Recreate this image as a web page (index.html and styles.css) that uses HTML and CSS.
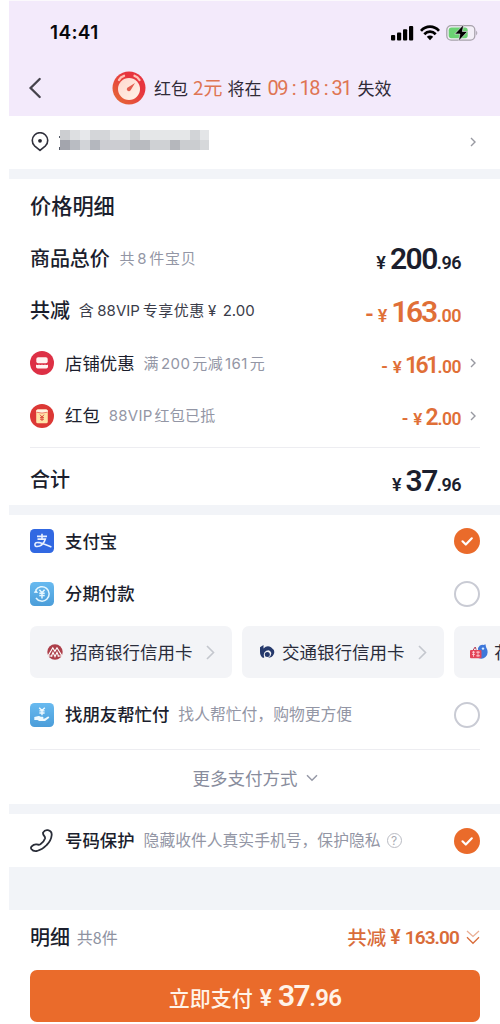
FILE: index.html
```html
<!DOCTYPE html>
<html lang="zh-CN">
<head>
<meta charset="utf-8">
<title>确认订单</title>
<link rel="stylesheet" href="styles.css">
</head>
<body>
<div class="app">
  <header class="header">
    <div class="status">
      <span class="clock">14:41</span>
      <div class="status-icons">
        <svg width="23" height="16" viewBox="0 0 23 16"><rect x="0" y="10" width="4.2" height="5.5" rx="1"/><rect x="6" y="7.5" width="4.2" height="8" rx="1"/><rect x="12" y="4.3" width="4.2" height="11.2" rx="1"/><rect x="18" y="1" width="4.2" height="14.5" rx="1"/></svg>
        <svg width="20" height="16" viewBox="0 0 20 16"><g fill="none" stroke="#000" stroke-width="2.7"><path d="M1 5.8C6 .3 14 .3 19 5.8"/><path d="M4.3 9.2c3.3-3.4 8.1-3.4 11.4 0"/></g><path d="M6.8 11.7c2-1.7 4.4-1.7 6.4 0L10 15.2z"/></svg>
        <svg width="33" height="18" viewBox="0 0 33 18"><rect x=".8" y="1.6" width="28" height="14.5" rx="4.3" fill="#f3eff7" stroke="#a7a2ab" stroke-width="1.3"/><rect x="2.7" y="3.5" width="19" height="10.7" rx="2.7" fill="#6bd273"/><path d="M30.2 6.5q2.2 2.4 0 5z" fill="#a7a2ab"/><path d="M17.7.5 8.7 10h5.2l-1.3 7 8.9-9.5h-5.1z" stroke="#f3eff7" stroke-width=".6"/></svg>
      </div>
    </div>
    <div class="notice">
      <svg class="back" width="14" height="22" viewBox="0 0 14 22"><path d="M11.7 2 2.6 11l9.1 9"/></svg>
      <div class="notice-text">
        <svg width="34" height="34" viewBox="0 0 34 34"><defs><linearGradient id="ring" x1="1" y1="0" x2="0" y2="1"><stop offset=".35" stop-color="#e7353f"/><stop offset="1" stop-color="#e57135"/></linearGradient><linearGradient id="dial" x1="0" y1="0" x2="1" y2="1"><stop stop-color="#ffd8cf"/><stop offset="1" stop-color="#fff3e7"/></linearGradient></defs><circle cx="17" cy="17" r="16.5" fill="url(#ring)"/><circle cx="17" cy="18" r="11" fill="url(#dial)"/><path d="M7 9q1.5-3.2 5-4.2M22.5 4.8q3.2 1 5 4.2" fill="none" stroke="#ffc2b7" stroke-width="2.3" stroke-linecap="round"/><path d="m23 12-4.2 7.1a2.1 2.1 0 1 1-2.6-2.9z" fill="#e35e50"/></svg>
        <span class="n1">红包</span><span class="n2 hot">2元</span><span class="n3">将在</span><span class="time hot"><b>09</b><i>:</i><b>18</b><i>:</i><b>31</b></span><span class="n4">失效</span>
      </div>
    </div>
  </header>

  <section class="address">
    <svg width="18" height="20" viewBox="0 0 18 20"><path d="M9 18.4 3.5 13.8a7.7 7.7 0 1 1 11 0z" fill="none" stroke="#30303c" stroke-width="1.6" stroke-linejoin="round"/><circle cx="9" cy="8.8" r="1.9" fill="#25252f"/></svg>
    <svg class="mask" width="151" height="21" viewBox="0 0 151 21" shape-rendering="crispEdges"><path d="M0 6h1v2H0zM0 17h1v3H0z" fill="#555b68"/><path d="M1 0h10v10H1z" fill="#ccced1"/><path d="M11 0h10v10H11z" fill="#dddfe1"/><path d="M21 0h10v10H21z" fill="#e7e8eb"/><path d="M31 0h20v10H31z" fill="#d4d6d9"/><path d="M51 0h20v10H51z" fill="#e3e4e6"/><path d="M71 0h10v10H71z" fill="#d1d3d5"/><path d="M81 0h50v10H81z" fill="#e5e7e8"/><path d="M131 0h10v10h-10z" fill="#d2d4d7"/><path d="M141 0h9v10h-9z" fill="#e3e5e7"/><path d="M1 10h10v10H1z" fill="#a3a5ad"/><path d="M11 10h10v10H11z" fill="#b9bcc2"/><path d="M21 10h10v10H21z" fill="#d2d4d8"/><path d="M31 10h10v10H31z" fill="#b4b7be"/><path d="M41 10h30v10H41z" fill="#cccdd2"/><path d="M71 10h20v10H71z" fill="#b9bbc0"/><path d="M91 10h20v10H91z" fill="#cfd1d4"/><path d="M111 10h10v10h-10z" fill="#b5b7bc"/><path d="M121 10h20v10h-20z" fill="#cbcdd0"/><path d="M141 10h9v10h-9z" fill="#d6d8da"/></svg>
    <svg class="arrow" width="6" height="10" viewBox="0 0 6 10"><path d="m1 1 4 4-4 4"/></svg>
  </section>

  <section class="prices">
    <h2>价格明细</h2>
    <div class="row"><span class="label">商品总价</span><span class="note count">共<b>8</b>件宝贝</span><span class="amount big"><i>¥</i><b>200</b><small>.96</small></span></div>
    <div class="row"><span class="label reduce">共减</span><span class="vip">含<b>88VIP</b>专享优惠<em>¥</em><b>2.00</b></span><span class="amount big orange"><u>-</u><i>¥</i><b>163</b><small>.00</small></span></div>
    <div class="row">
      <svg class="icon" width="24" height="24" viewBox="0 0 24 24"><circle cx="12" cy="12" r="12" fill="#dd3045"/><rect x="6.3" y="6.2" width="11.4" height="6" rx="1.8" fill="#fff3f1"/><path d="M6 13.6q1.5 1 3 0 1.5 1 3 0 1.5 1 3 0 1.5 1 3 0v2.2q0 1.7-1.7 1.7H7.7Q6 17.500 6 15.800z" fill="#fff3f1"/></svg>
      <span class="name light">店铺优惠</span><span class="note shop">满<b>200</b>元减<b>161</b>元</span><span class="amount mid orange"><u>-</u><i>¥</i><b class="tight">161</b><small>.00</small></span><svg class="arrow row-arrow" width="6" height="10" viewBox="0 0 6 10"><path d="m1 1 4 4-4 4"/></svg></div>
    <div class="row">
      <svg class="icon" width="24" height="24" viewBox="0 0 24 24"><circle cx="12" cy="12" r="12" fill="#dc3835"/><rect x="6.2" y="5.5" width="11.6" height="13.8" rx="1.6" fill="#ffe3a8"/><path d="M6.200 7.100q0-1.600 1.600-1.600h8.400q1.600 0 1.600 1.600v1q-5.800 2-11.600 0z" fill="#fff4e3"/><path d="M6.500 8.200q5.500 1.800 11 0" fill="none" stroke="#e86150" stroke-width=".8"/><path d="m10 10.700 2 2.300 2-2.300M12 13v4M10 13.400h4M10 15.200h4" fill="none" stroke="#dd4e3e"/></svg>
      <span class="name light">红包</span><span class="note packet"><b>88VIP</b>红包已抵</span><span class="amount mid orange"><u>-</u><i>¥</i><b>2</b><small>.00</small></span><svg class="arrow row-arrow" width="6" height="10" viewBox="0 0 6 10"><path d="m1 1 4 4-4 4"/></svg></div>
    <div class="row total"><span class="label">合计</span><span class="amount big"><i>¥</i><b>37</b><small>.96</small></span></div>
  </section>

  <section class="payment">
    <div class="row">
      <svg class="icon" width="24" height="24" viewBox="0 0 24 24"><rect width="24" height="24" rx="4.5" fill="#3168e2"/><path d="M12 4.800v5M7 7.400h10M7.500 10.100h7.800q-1.600 5.400-5.700 7-4.500 1.400-4.700-1.500.2-2.700 4.200-2 4.700 1.300 12.300 4.400" fill="none" stroke="#e8f0ff" stroke-width="1.6"/></svg>
      <span class="name">支付宝</span><span class="check on"><svg width="26" height="26" viewBox="0 0 26 26"><path d="m8.500 13.300 3.300 3.200 6-6.200"/></svg></span></div>
    <div class="row">
      <svg class="icon" width="24" height="24" viewBox="0 0 24 24"><defs><linearGradient id="sky" x2="0" y2="1"><stop stop-color="#68baf0"/><stop offset="1" stop-color="#4b9dd9"/></linearGradient></defs><rect width="24" height="24" rx="4.5" fill="url(#sky)"/><path d="M5.800 8.200A7.200 7.200 0 1 1 6 16" fill="none" stroke="#e5f7ff" stroke-width="1.5"/><path d="m3.800 10.700 4.200.3-2-3.800z" fill="#e5f7ff"/><path d="m9.400 7.700 2.600 3 2.600-3M12 10.700v5.700M9.300 11.300h5.400M9.300 13.600h5.400" fill="none" stroke="#e5f7ff" stroke-width="1.5"/></svg>
      <span class="name">分期付款</span><span class="check"></span></div>
    <div class="cards">
      <div class="card"><svg class="bank" width="16" height="16" viewBox="0 0 16 16"><circle cx="8" cy="8" r="7.7" fill="#ad3f4a"/><path d="m1.200 11.600 4.600-7.800 2.100 3.600L10 3.800l4.800 7.800M4.200 12.700 6 8.300l2 4.400 2-4.400 1.800 4.400M1.500 12h4M10.500 12h4" fill="none" stroke="#fff" stroke-width="1.1"/></svg><span>招商银行信用卡</span><svg class="card-arrow" width="9" height="15" viewBox="0 0 9 15"><path d="m1 1 6.500 6.500L1 14"/></svg></div>
      <div class="card"><svg class="bank" width="16" height="16" viewBox="0 0 16 16"><path d="M1 3.200 4.500 1v3.500Q8 .8 12 3.200q4.800 3.300 2.600 7.300-1.700 3.200-5.400 3.200 3.500-1.700 3-5-1.300-3.800-5-1.900Q3.600 9 5.300 13.300L4.200 14Q1 12 1 8z" fill="#25396c"/><circle cx="8.300" cy="10.600" r="2.500" fill="#25396c"/></svg><span>交通银行信用卡</span><svg class="card-arrow" width="9" height="15" viewBox="0 0 9 15"><path d="m1 1 6.500 6.500L1 14"/></svg></div>
      <div class="card"><svg class="bank hua" width="18" height="16" viewBox="0 0 18 16"><path d="M8 4q2-4 5.500-3l2-.8L16 3q3.500 6-.5 10-3 3-7 1z" fill="#3e77da"/><circle cx="13" cy="4.600" r="1.200" fill="#d9edff"/><path d="m3.200 6 2-3 1 2.600" fill="none" stroke="#b33d58"/><rect y="6" width="11.500" height="8.300" rx="1" fill="#e34458"/><path d="M2 8.200h3M3.500 7v5.800M2 10.400h3M6.200 8.200h3.700M8 7v5.800M6.200 11.800h3.700" stroke="#ffd8de" stroke-width=".8"/></svg><span>花</span></div>
    </div>
    <div class="row friend">
      <svg class="icon" width="24" height="24" viewBox="0 0 24 24"><rect width="24" height="24" rx="4.5" fill="url(#sky)"/><path d="m9.200 4.700 2.800 2.800 2.800-2.800M12 7v5.200M9.400 7.900h5.200M9.400 10h5.200" fill="none" stroke="#effaff" stroke-width="1.4"/><path d="m4.300 14 3.200-.8q2-.7 3.200.6h2.200q1.400 1-.1 1.800l2-.1 3.200-2.100q2-.1 1 1.500l-4 3.200H9.200L7.500 17H4.300z" fill="#effaff"/></svg>
      <span class="name">找朋友帮忙付</span><span class="note help">找人帮忙付，购物更方便</span><span class="check"></span></div>
    <div class="more"><span>更多支付方式</span><svg width="12" height="8" viewBox="0 0 12 8"><path d="m1 1.300 5 5 5-5"/></svg></div>
  </section>

  <section class="protect">
    <svg class="icon" width="24" height="24" viewBox="0 0 24 24"><path d="M13 3.600q1.800-3 4.900-2.400 4 .8 3.800 4.800-.5 5.500-5 10-4.300 4.600-9.700 6-3.700.7-5.700-2-.8-1.400.4-2.700 2.400-2.500 5.200-1.900 1.900.8 3.500-.1 3.600-2.500 4.600-5.800.3-1.400-.8-2.500-1.300-1.500-1.200-3.400z" fill="none" stroke="#292d38" stroke-width="1.800" stroke-linejoin="round"/></svg>
    <span class="name">号码保护</span><span class="note privacy">隐藏收件人真实手机号，保护隐私</span><span class="question">?</span><span class="check on"><svg width="26" height="26" viewBox="0 0 26 26"><path d="m8.500 13.300 3.300 3.200 6-6.200"/></svg></span>
  </section>

  <footer class="footer">
    <div class="summary"><span class="label">明细</span><span class="items">共8件</span><div class="saving"><span>共减</span><i>¥</i><b>163.00</b><svg width="14" height="15" viewBox="0 0 14 15"><path d="m1 1 6 5.400L13 1" opacity=".55"/><path d="m1 7.300 6 6 6-6"/></svg></div></div>
    <button class="pay"><span>立即支付</span><i>¥</i><b>37</b><small>.96</small></button>
  </footer>
</div>
</body>
</html>
```
FILE: styles.css
```css
* { box-sizing: border-box; }
body { margin: 0; background: #fff; overflow: hidden; color: #1b1e2d; font-family: "Noto Sans CJK SC", sans-serif; }
i, em { font-style: normal; }
b { font-weight: inherit; }
u { text-decoration: none; }
svg { display: block; flex: none; }
span { white-space: nowrap; }
.app { width: 491px; height: 1024px; margin-left: 9px; display: flex; flex-direction: column; background: #f2f4f8; overflow: hidden; border-top: 1px solid #fbf9fc; }
.header { height: 115px; background: #f3eafb; flex: none; }
.status { height: 62px; padding: 1px 21px 0 41px; display: flex; align-items: center; justify-content: space-between; }
.clock { font: 600 19px/24px Inter, sans-serif; letter-spacing: .35px; color: #08080c; }
.status-icons { display: flex; align-items: center; gap: 6px; }
.notice { height: 50px; display: flex; align-items: center; padding-left: 19px; }
.back path { fill: none; stroke: #45434c; stroke-width: 2.3; stroke-linecap: round; }
.notice-text { display: flex; align-items: center; margin-left: 70px; color: #302a37; font-size: 17px; line-height: 26px; }
.n1 { margin-left: 8px; }
.n2 { font-size: 19px; margin: -2px 0 0 5px; }
.n3 { margin-left: 5px; }
.n4 { margin-left: 10px; }
.hot { color: #df7553; }
.time { display: flex; font: 400 20px/26px Roboto, sans-serif; margin-left: 6px; }
.time b { width: 20px; letter-spacing: -1.5px; }
.time b:last-child { width: 16px; }
.time i { width: 11px; margin-left: 1px; text-align: center; }
.address { height: 53px; background: #fff; flex: none; display: flex; align-items: center; padding: 0 24px 2px 22px; margin-bottom: 10px; }
.mask { margin-left: 10px; margin-top: -2px; }
.arrow { margin-left: auto; }
.arrow path, .card-arrow path { fill: none; stroke: #9899a1; stroke-width: 1.4; }
.prices { height: 326px; flex: none; background: #fff; padding: 0 20px 0 21px; margin-bottom: 10px; }
h2 { margin: 0; height: 53px; line-height: 51px; font-size: 21.2px; font-weight: 500; }
.row { height: 52.5px; display: flex; align-items: center; position: relative; }
.label, .name, .note, .vip { margin-top: -2px; }
.label { font-size: 20px; font-weight: 500; letter-spacing: -.1px; }
.note { color: #9396a5; font-size: 15px; margin-left: 10px; }
.note b, .vip b { font-family: Inter, sans-serif; }
.count { letter-spacing: .7px; }
.count b { margin: 0 2px; }
.vip { font-size: 15px; letter-spacing: .5px; margin-left: 9px; color: #3a3c49; }
.vip b { margin: 0 3px; letter-spacing: 0; }
.vip em { font-family: Inter, sans-serif; margin: 0 3px; }
.amount { margin-left: auto; margin-right: 19px; margin-top: 6px; display: flex; align-items: baseline; font-family: Roboto, sans-serif; font-weight: 600; line-height: 32px; }
.amount i { font-size: 18px; margin-right: 4px; }
.amount u { font-size: 23px; margin-right: 4px; }
.big b { font-size: 30px; letter-spacing: -1.5px; }
.big.orange b { letter-spacing: -2.3px; margin-right: 1px; }
.big small { font-size: 18px; letter-spacing: -.5px; }
.mid b { font-size: 23px; letter-spacing: -1px; }
.mid b.tight { letter-spacing: -2.6px; margin-right: 1px; }
.mid small { font-size: 17.5px; letter-spacing: -.5px; }
.mid i { font-size: 17px; margin-right: 3px; }
.mid u { font-size: 18px; margin-right: 5px; }
.orange { color: #e06f37; }
.row .row-arrow { margin-left: -10px; margin-right: 4px; }
.name { margin-left: 11px; font-size: 17.4px; font-weight: 500; }
.light { font-weight: 400; }
.shop { letter-spacing: .4px; margin-left: 9px; }
.shop b { margin: 0 2px; }
.packet { margin-left: 9px; letter-spacing: .25px; }
.packet b { margin-right: 2px; }
.total { height: 58px; border-top: 1px solid #ededf1; margin-top: 5px; padding-top: 6px; }
.payment { height: 289px; flex: none; background: #fff; padding: 0 20px 0 21px; margin-bottom: 10px; overflow: hidden; }
.check { width: 26px; height: 26px; border-radius: 50%; border: 2px solid #c9cbd4; margin-left: auto; }
.check.on { border: 0; background: #ea6b2b; }
.check path { fill: none; stroke: #fff; stroke-width: 2.2; stroke-linecap: round; stroke-linejoin: round; }
.cards { display: flex; gap: 10px; margin: 6px -20px 0 0; overflow: hidden; }
.card { width: 202px; height: 52px; flex: none; border-radius: 7px; background: #f3f4f7; display: flex; align-items: center; padding: 0 17px 0 17px; color: #292c3b; font-size: 17.5px; }
.card span { margin: -2px 0 0 7px; }
.card:last-child { padding-left: 16px; }
.card:last-child span { margin-left: 6px; }
.card-arrow { margin-left: auto; }
.card-arrow path { stroke: #c4c7ce; stroke-width: 1.6; }
.friend { height: 71px; padding-top: 2px; }
.help { margin-left: 9px; font-size: 15.8px; }
.more { border-top: 1px solid #ededf1; height: 56px; display: flex; align-items: center; justify-content: center; gap: 8px; color: #888c9c; font-size: 17.5px; }
.more path { fill: none; stroke: #9699a7; stroke-width: 1.5; }
.protect { height: 53px; flex: none; background: #fff; display: flex; align-items: center; padding: 0 20px 0 21px; margin-bottom: 43px; }
.privacy { font-size: 15.8px; margin-left: 9px; }
.question { margin-left: 6px; width: 15px; height: 15px; border: 1px solid #b9bbc3; border-radius: 50%; color: #a9abb3; font: 12px/13px Inter, sans-serif; text-align: center; }
.footer { height: 114px; flex: none; background: #fff; padding: 0 20px 0 21px; }
.summary { height: 60px; display: flex; align-items: center; padding-bottom: 6px; }
.items { margin-left: 7px; font-size: 16px; color: #8e92a1; }
.saving { display: flex; align-items: center; margin-left: auto; color: #d96c3a; font-size: 19.5px; font-weight: 500; }
.saving span { margin-top: -2px; }
.saving i, .saving b { font-family: Roboto, sans-serif; font-weight: 600; }
.saving i { margin: 0 4px; }
.saving b { font-size: 19px; letter-spacing: -.9px; }
.saving svg { margin-left: 7px; }
.saving path { fill: none; stroke: #d96c3a; stroke-width: 1.3; }
.pay { width: 450px; height: 52px; border: 0; border-radius: 7px; background: #ea6b2b; color: #fff3e8; font-family: "Noto Sans CJK SC", sans-serif; font-size: 21px; font-weight: 500; padding: 0; display: flex; justify-content: center; align-items: baseline; line-height: 51px; }
.pay i, .pay b, .pay small { font-family: Roboto, sans-serif; font-weight: 600; }
.pay i { margin: 0 6px 0 7px; font-size: 23px; }
.pay b { font-size: 30px; letter-spacing: -1.5px; }
.pay small { font-size: 24px; letter-spacing: -.7px; }
```
